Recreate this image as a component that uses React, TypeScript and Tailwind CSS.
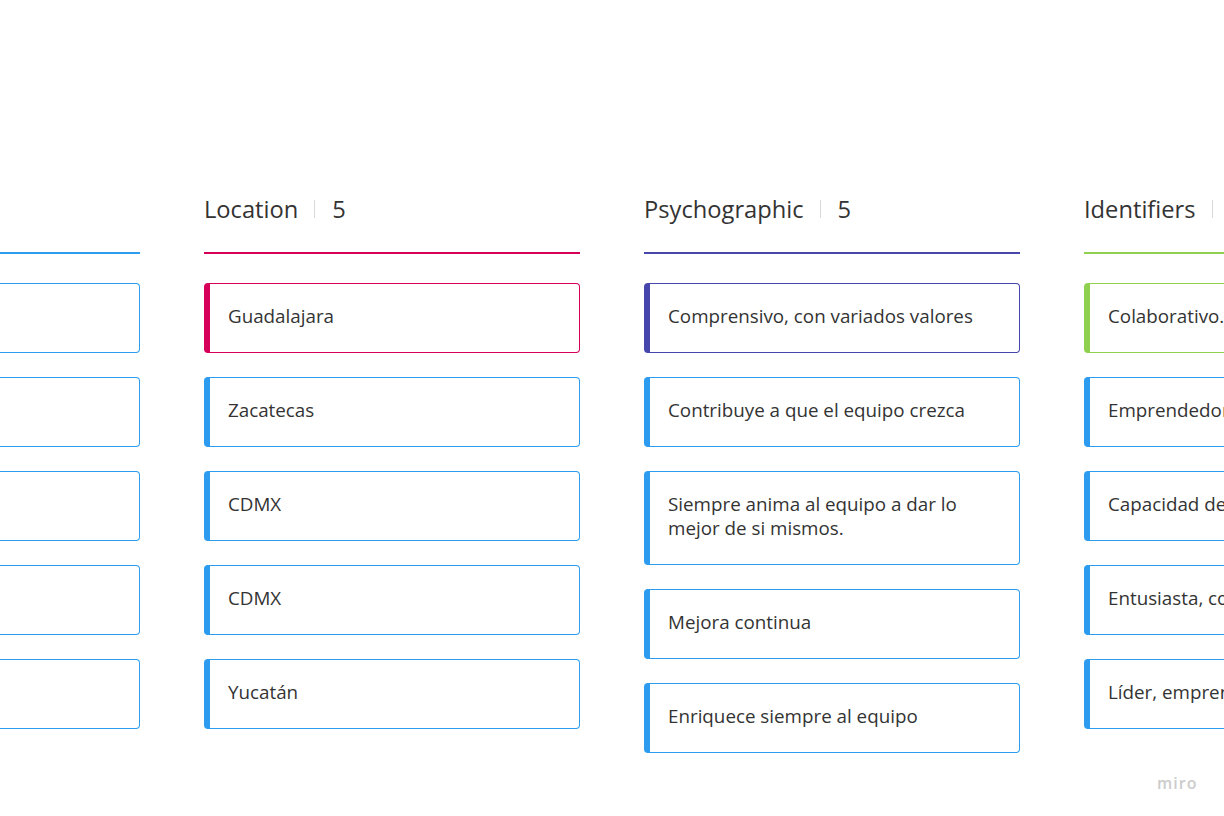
import React from "react";

type Col = {
  title: string;
  count: number;
  color: string;
  cards: { text: string; first?: boolean }[];
};

const cols: Col[] = [
  {
    title: "Demographic",
    count: 5,
    color: "blue",
    cards: [
      { text: "" },
      { text: "" },
      { text: "" },
      { text: "" },
      { text: "" },
    ],
  },
  {
    title: "Location",
    count: 5,
    color: "pink",
    cards: [
      { text: "Guadalajara", first: true },
      { text: "Zacatecas" },
      { text: "CDMX" },
      { text: "CDMX" },
      { text: "Yucatán" },
    ],
  },
  {
    title: "Psychographic",
    count: 5,
    color: "indigo",
    cards: [
      { text: "Comprensivo, con variados valores", first: true },
      { text: "Contribuye a que el equipo crezca" },
      { text: "Siempre anima al equipo a dar lo mejor de si mismos." },
      { text: "Mejora continua" },
      { text: "Enriquece siempre al equipo" },
    ],
  },
  {
    title: "Identifiers",
    count: 5,
    color: "green",
    cards: [
      { text: "Colaborativo.", first: true },
      { text: "Emprendedor" },
      { text: "Capacidad de" },
      { text: "Entusiasta, con" },
      { text: "Líder, emprendedor" },
    ],
  },
];

const lineCls: Record<string, string> = {
  blue: "bg-[#2d9bf0]",
  pink: "bg-[#d6005b]",
  indigo: "bg-[#4646ac]",
  green: "bg-[#8fd14f]",
};

const firstCardCls: Record<string, string> = {
  blue: "border-[#2d9bf0]",
  pink: "border-[#d6005b]",
  indigo: "border-[#4646ac]",
  green: "border-[#8fd14f]",
};

function Card({ text, color, first }: { text: string; color: string; first?: boolean }) {
  const cls = first ? firstCardCls[color] : "border-[#2d9bf0]";
  return (
    <div
      className={`border border-l-[6px] rounded-[4px] bg-white pl-[18px] pr-6 pt-[20px] pb-[24px] text-[18.8px] leading-[24px] text-[#333333] whitespace-nowrap overflow-hidden ${cls}`}
    >
      <div className="whitespace-normal min-h-[24px]">{text}</div>
    </div>
  );
}

export default function App() {
  return (
    <div
      className="relative w-full h-[816px] overflow-hidden bg-white"
      style={{ fontFamily: '"Open Sans", "Noto Sans", sans-serif' }}
    >
      <div className="flex gap-16 ml-[-236px] pt-[193px]">
        {cols.map((c) => (
          <div key={c.title} className="w-[376px] shrink-0">
            <div className="flex items-center h-8 text-[23.7px] leading-[32px] text-[#333333] whitespace-nowrap">
              <span>{c.title}</span>
              <span className="ml-[16px] mr-[17px] w-px h-[18px] bg-[#d9d9d9]" />
              <span>{c.count}</span>
            </div>
            <div className={`mt-[27px] h-[2px] ${lineCls[c.color]}`} />
            <div className="mt-[29px] flex flex-col gap-6">
              {c.cards.map((card, i) => (
                <Card key={i} text={card.text} color={c.color} first={card.first} />
              ))}
            </div>
          </div>
        ))}
      </div>
      <div className="absolute left-[1157px] top-[771px] text-[16px] font-semibold tracking-[1px] text-[#cccccc]">
        miro
      </div>
    </div>
  );
}
